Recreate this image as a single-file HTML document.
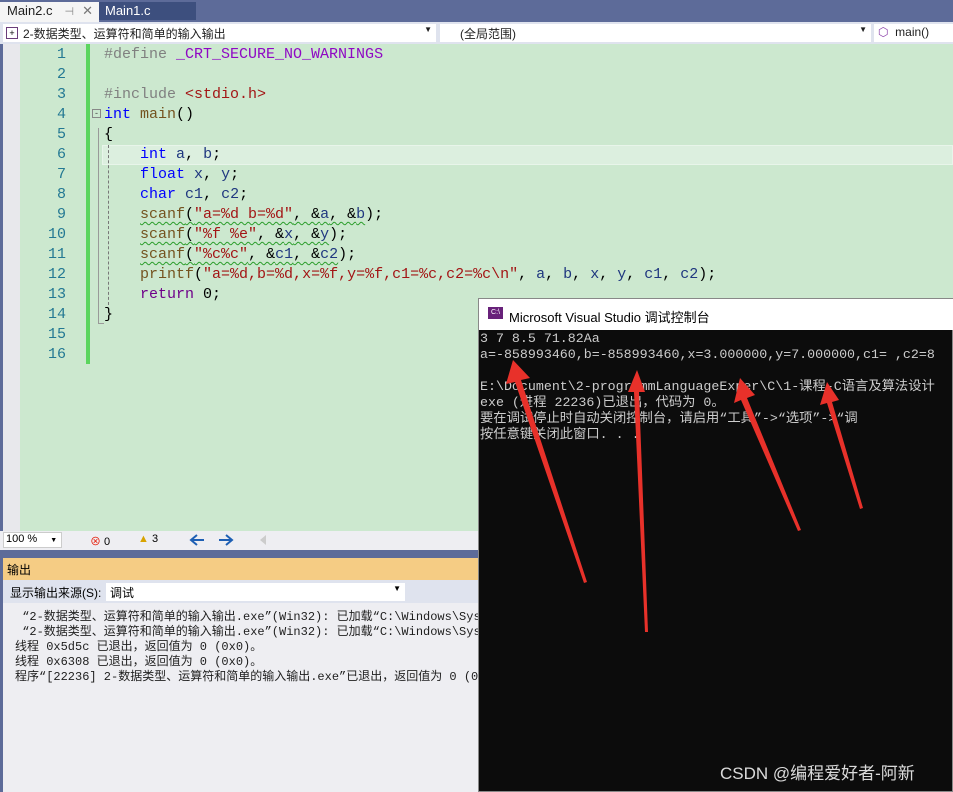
<!DOCTYPE html>
<html><head><meta charset="utf-8"><style>
*{margin:0;padding:0;box-sizing:border-box}
body{width:953px;height:792px;overflow:hidden;position:relative;background:#5d6b99;font-family:"Liberation Sans","Noto Sans CJK SC",sans-serif}
.abs{position:absolute}
.code{font-family:"Liberation Mono","Noto Sans CJK SC",monospace;font-size:15px;white-space:pre;line-height:20px}
.ln{position:absolute;left:30px;width:36px;text-align:right;color:#237893;font-family:"Liberation Mono",monospace;font-size:15px;line-height:20px}
.k{color:#0000ff}.s{color:#a31515}.f{color:#74531f}.m{color:#6f008a}.p{color:#808080}.v{color:#1f377f}.r{color:#8f08c4}
.sq{text-decoration:underline wavy #2a9d2a;text-decoration-thickness:1px;text-underline-offset:3px}
.con{font-family:"Liberation Mono","Noto Sans CJK SC",monospace;font-size:13.3px;color:#ccc;white-space:pre;line-height:16px}
.out{font-family:"Liberation Mono","Noto Sans CJK SC",monospace;font-size:12px;color:#1e1e1e;white-space:pre;line-height:15px}
</style></head><body>
<div class="abs" style="left:0;top:0;width:953px;height:22px;background:#5d6b99"></div>
<div class="abs" style="left:0;top:2px;width:99px;height:20px;background:#f5f5f5;font-size:13px;padding:1px 0 0 7px;color:#1e1e1e">Main2.c<span style="color:#888;margin-left:12px;font-size:11px">⊣</span><span style="color:#777;margin-left:8px">✕</span></div>
<div class="abs" style="left:99px;top:2px;width:97px;height:18px;background:#3d4f7e;font-size:13px;padding:1px 0 0 6px;color:#fff">Main1.c</div>
<div class="abs" style="left:0;top:22px;width:953px;height:22px;background:#dfe3ee"></div>
<div class="abs" style="left:3px;top:24px;width:433px;height:18px;background:#fff;font-size:12px;padding:1px 0 0 20px;color:#1e1e1e">2-数据类型、运算符和简单的输入输出<span class="abs" style="right:4px;top:1px;font-size:8px">▼</span></div>
<div class="abs" style="left:6px;top:27px;width:12px;height:12px;border:1px solid #6a3d7a;font-size:9px;line-height:10px;text-align:center">+</div>
<div class="abs" style="left:440px;top:24px;width:431px;height:18px;background:#fff;font-size:12px;padding:1px 0 0 20px;color:#1e1e1e">(全局范围)<span class="abs" style="right:4px;top:1px;font-size:8px">▼</span></div>
<div class="abs" style="left:874px;top:24px;width:79px;height:18px;background:#fff;font-size:12px;padding:1px 0 0 4px;color:#1e1e1e"><span style="color:#8a3fa8">⬡</span>&nbsp; main()</div>
<div class="abs" style="left:3px;top:44px;width:17px;height:487px;background:#e8e8ec"></div>
<div class="abs" style="left:20px;top:44px;width:933px;height:487px;background:#cce8cf"></div>
<div class="abs" style="left:86px;top:44px;width:4px;height:320px;background:#5bd55e"></div>
<div class="abs" style="left:102px;top:145px;width:851px;height:20px;background:#dcefdf;border:1px solid #e8f5ea"></div>
<div class="abs" style="left:108px;top:145px;height:160px;border-left:1px dashed #777"></div>
<div class="abs" style="left:98px;top:128px;height:196px;border-left:1px solid #999"></div>
<div class="abs" style="left:98px;top:323px;width:6px;border-top:1px solid #999"></div>
<div class="abs" style="left:92px;top:109px;width:9px;height:9px;border:1px solid #888;font-size:9px;line-height:7px;text-align:center;color:#444">-</div>
<div class="ln" style="top:45px">1</div><div class="ln" style="top:65px">2</div><div class="ln" style="top:85px">3</div><div class="ln" style="top:105px">4</div><div class="ln" style="top:125px">5</div><div class="ln" style="top:145px">6</div><div class="ln" style="top:165px">7</div><div class="ln" style="top:185px">8</div><div class="ln" style="top:205px">9</div><div class="ln" style="top:225px">10</div><div class="ln" style="top:245px">11</div><div class="ln" style="top:265px">12</div><div class="ln" style="top:285px">13</div><div class="ln" style="top:305px">14</div><div class="ln" style="top:325px">15</div><div class="ln" style="top:345px">16</div>
<div class="abs code" style="left:104px;top:45px;color:#000"><span class="p">#define</span> <span class="r">_CRT_SECURE_NO_WARNINGS</span>

<span class="p">#include</span> <span class="s">&lt;stdio.h&gt;</span>
<span class="k">int</span> <span class="f">main</span>()
{
    <span class="k">int</span> <span class="v">a</span>, <span class="v">b</span>;
    <span class="k">float</span> <span class="v">x</span>, <span class="v">y</span>;
    <span class="k">char</span> <span class="v">c1</span>, <span class="v">c2</span>;
    <span class="sq"><span class="f">scanf</span>(<span class="s">"a=%d b=%d"</span>, &amp;<span class="v">a</span>, &amp;<span class="v">b</span></span>);
    <span class="sq"><span class="f">scanf</span>(<span class="s">"%f %e"</span>, &amp;<span class="v">x</span>, &amp;<span class="v">y</span></span>);
    <span class="sq"><span class="f">scanf</span>(<span class="s">"%c%c"</span>, &amp;<span class="v">c1</span>, &amp;<span class="v">c2</span></span>);
    <span class="f">printf</span>(<span class="s">"a=%d,b=%d,x=%f,y=%f,c1=%c,c2=%c\n"</span>, <span class="v">a</span>, <span class="v">b</span>, <span class="v">x</span>, <span class="v">y</span>, <span class="v">c1</span>, <span class="v">c2</span>);
    <span class="m">return</span> 0;
}</div>
<div class="abs" style="left:0;top:531px;width:953px;height:19px;background:#eeeef2"></div>
<div class="abs" style="left:3px;top:532px;width:59px;height:16px;background:#fff;border:1px solid #ccc;font-size:11px;padding:0 0 0 2px">100 %<span style="font-size:7px;margin-left:13px">▼</span></div>
<div class="abs" style="left:90px;top:533px;font-size:11px"><span style="color:#e51400">⊗</span> 0</div>
<div class="abs" style="left:138px;top:533px;font-size:11px"><span style="color:#d8a300">▲</span> 3</div>
<svg class="abs" style="left:188px;top:532px" width="80" height="16">
<g stroke="#1e5fb4" stroke-width="2" fill="none"><path d="M3,8H16M9,3L3,8L9,13"/><path d="M31,8H44M38,3L44,8L38,13"/></g>
<path d="M78,3L72,8L78,13Z" fill="#ccc"/>
</svg>
<div class="abs" style="left:3px;top:558px;width:950px;height:22px;background:#f5cc84;font-size:12px;padding:3px 0 0 4px">输出</div>
<div class="abs" style="left:3px;top:580px;width:950px;height:23px;background:#dfe3ee;font-size:12px;padding:4px 0 0 7px">显示输出来源(S):</div>
<div class="abs" style="left:106px;top:583px;width:299px;height:18px;background:#fff;font-size:12px;padding:1px 0 0 4px">调试<span class="abs" style="right:4px;top:1px;font-size:8px">▼</span></div>
<div class="abs" style="left:3px;top:603px;width:950px;height:189px;background:#eeeef2"></div>
<div class="abs out" style="left:15px;top:610px"> “2-数据类型、运算符和简单的输入输出.exe”(Win32): 已加载“C:\Windows\SysWOW64
 “2-数据类型、运算符和简单的输入输出.exe”(Win32): 已加载“C:\Windows\SysWOW64
线程 0x5d5c 已退出，返回值为 0 (0x0)。
线程 0x6308 已退出，返回值为 0 (0x0)。
程序“[22236] 2-数据类型、运算符和简单的输入输出.exe”已退出，返回值为 0 (0x0)</div>
<div class="abs" style="left:478px;top:298px;width:475px;height:494px;background:#0c0c0c;border:1px solid #888"></div>
<div class="abs" style="left:479px;top:299px;width:474px;height:31px;background:#fff;font-size:13px;padding:8px 0 0 30px;color:#000">Microsoft Visual Studio 调试控制台</div>
<div class="abs" style="left:488px;top:307px;width:15px;height:12px;background:#68217a;color:#fff;font-size:7px;line-height:12px;text-align:center">C:\</div>
<div class="abs con" style="left:480px;top:331px">3 7 8.5 71.82Aa
a=-858993460,b=-858993460,x=3.000000,y=7.000000,c1= ,c2=8

E:\Document\2-programmLanguageExper\C\1-课程-C语言及算法设计
exe (进程 22236)已退出，代码为 0。
要在调试停止时自动关闭控制台，请启用“工具”->“选项”->“调
按任意键关闭此窗口. . .</div>
<svg class="abs" style="left:0;top:0" width="953" height="792">
<g fill="#e8312a">
<polygon points="513,360 530,378 521,380 587,582 584,583 515,382 506,384"/>
<polygon points="637,370 645,392 639,392 648,632 645,632 634,392 628,392"/>
<polygon points="740,378 755,395 747,398 801,530 798,531 741,400 734,403"/>
<polygon points="827,382 839,400 832,402 863,508 860,509 827,403 820,405"/>
</g>
<text x="720" y="779" font-family="Liberation Sans,Noto Sans CJK SC,sans-serif" font-size="17" fill="#ffffff" fill-opacity="0.85">CSDN @编程爱好者-阿新</text>
</svg>
</body></html>
